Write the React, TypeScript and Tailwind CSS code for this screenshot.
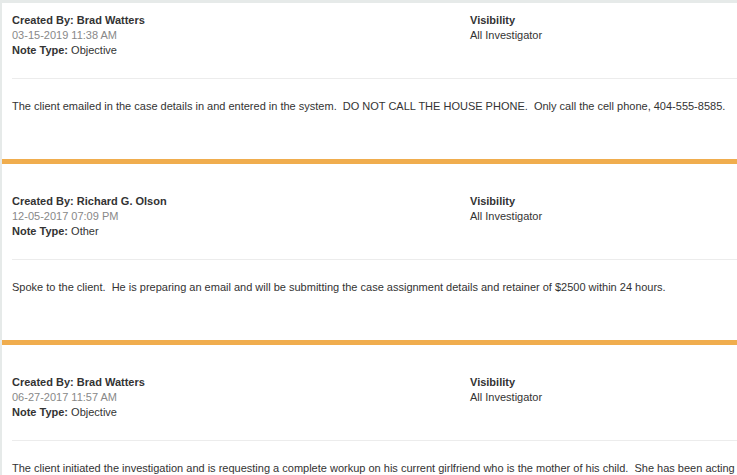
import React from 'react';

type Note = {
    author: string;
    date: string;
    type: string;
    visibility: string;
    body: string;
};

const notes: Note[] = [
    {
        author: 'Brad Watters',
        date: '03-15-2019 11:38 AM',
        type: 'Objective',
        visibility: 'All Investigator',
        body: 'The client emailed in the case details in and entered in the system.  DO NOT CALL THE HOUSE PHONE.  Only call the cell phone, 404-555-8585.',
    },
    {
        author: 'Richard G. Olson',
        date: '12-05-2017 07:09 PM',
        type: 'Other',
        visibility: 'All Investigator',
        body: 'Spoke to the client.  He is preparing an email and will be submitting the case assignment details and retainer of $2500 within 24 hours.',
    },
    {
        author: 'Brad Watters',
        date: '06-27-2017 11:57 AM',
        type: 'Objective',
        visibility: 'All Investigator',
        body: 'The client initiated the investigation and is requesting a complete workup on his current girlfriend who is the mother of his child.  She has been acting strange lately and he wants to know more.',
    },
];

const NoteCard: React.FC<{ note: Note; first: boolean }> = ({ note, first }) => (
    <div className={`pl-[10px] pb-[45px] ${first ? 'pt-[10px]' : 'pt-[30px]'}`}>
        {/* Header */}
        <div className="flex leading-[15px]">
            <div className="w-[458px] shrink-0">
                <div>
                    <span className="font-bold">Created By:</span> <span className="font-bold">{note.author}</span>
                </div>
                <div className="text-[#888888]">{note.date}</div>
                <div>
                    <span className="font-bold">Note Type:</span> {note.type}
                </div>
            </div>
            <div>
                <div className="font-bold">Visibility</div>
                <div>{note.visibility}</div>
            </div>
        </div>

        <div className="mt-[20px] h-px bg-[#ececec]" />

        {/* Body */}
        <p className="mt-[20px] leading-[15px] whitespace-pre">{note.body}</p>
    </div>
);

const App: React.FC = () => {
    return (
        <div className="h-[475px] w-[737px] overflow-hidden bg-[#e6eae9] pt-[3px] pl-[2px] font-['Liberation_Sans',Arial,sans-serif] text-[11px] text-[#333333]">
            <div className="bg-white min-h-full">
                {notes.map((note, i) => (
                    <div key={i}>
                        {i > 0 && <div className="h-[5px] bg-[#f0ad4e]" />}
                        <NoteCard note={note} first={i === 0} />
                    </div>
                ))}
            </div>
        </div>
    );
};

export default App;
